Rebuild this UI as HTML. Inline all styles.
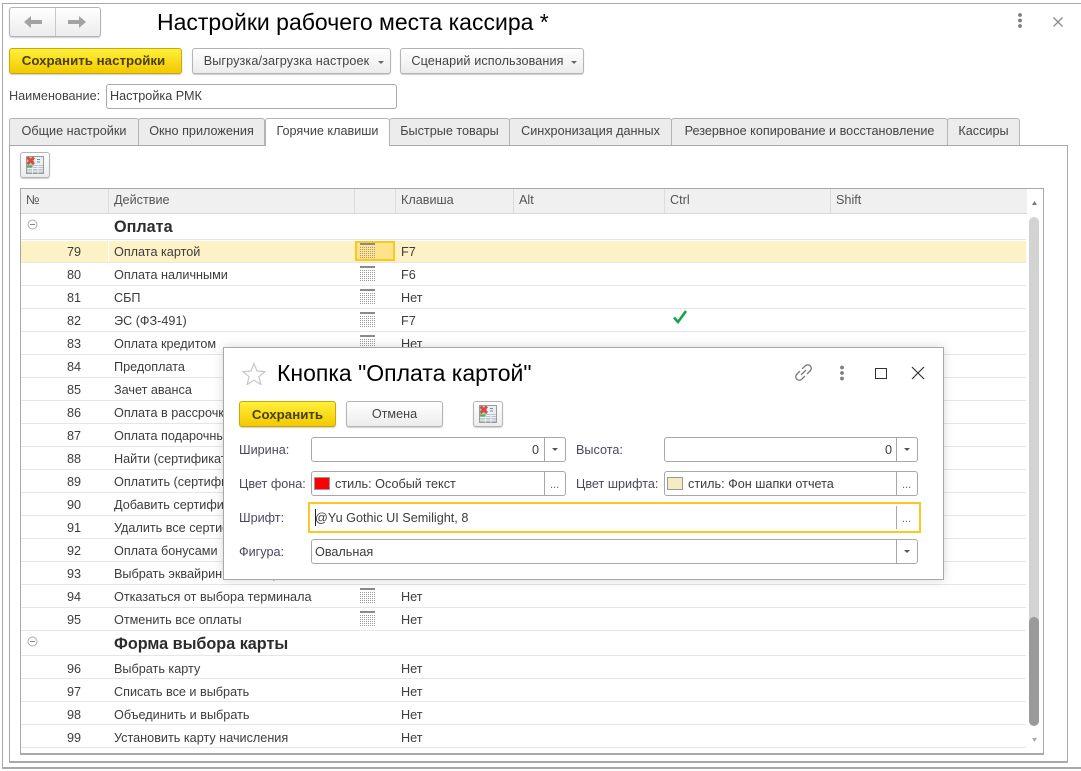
<!DOCTYPE html>
<html lang="ru"><head><meta charset="utf-8"><title>Настройки рабочего места кассира</title>
<style>
html,body{margin:0;padding:0;background:#fff}
#p{position:relative;width:1081px;height:771px;overflow:hidden;background:#fff;font:12.65px/16px "Liberation Sans",Arial,sans-serif;color:#3c3c3c}
#p div,#p span,#p svg{position:absolute;box-sizing:border-box;white-space:nowrap}
.btn{background:linear-gradient(#fff,#ececec);border:1px solid #b4b4b4;border-radius:3px;box-shadow:0 1px 1px #ccc;text-align:center;color:#444}
.y{background:linear-gradient(#fff03a,#f2c900);border:1px solid #c8a90c;border-radius:3px;box-shadow:0 1px 1px #ccc;text-align:center;font-weight:bold;color:#4a3f08;font-size:13.3px}
.tab{top:118px;height:27px;background:#ececec;border:1px solid #b4b4b4;border-bottom:0;border-radius:3px 3px 0 0;text-align:center;line-height:25px;color:#444}
.h{top:189px;height:24px;background:#f0f0f0;line-height:23px;padding-left:5px;color:#555;border-right:1px solid #dcdcdc}
.r{left:21px;width:1005px;height:23px;border-bottom:1px solid #e6e6e6}
.n{left:0;width:60px;text-align:right;top:4px}
.a{left:93px;top:4px}
.k{left:380px;top:4px}
.b .n,.b .a,.b .k{top:5px}
.g{left:93px;top:5px;font-size:16.200px;font-weight:bold;color:#2c2c2c}
.lb{color:#4d4660}
.f{background:#fff;border:1px solid #a8a8a8;border-radius:3px;color:#3c3c3c}
.sep{width:1px;background:#a8a8a8;top:0;bottom:0}
.t{font-size:23px;line-height:28px;color:#000}
</style></head><body>
<div id="p">
<svg width="0" height="0" style="left:0;top:0"><defs>
<pattern id="d" width="2" height="2" patternUnits="userSpaceOnUse"><rect width="1" height="1" fill="#9a9a9a"/></pattern>
<symbol id="cal" viewBox="0 0 15 17"><rect x="0" y="2" width="15" height="2" fill="#8a8a8a"/><rect x="0" y="6" width="15" height="11" fill="url(#d)"/></symbol>
<symbol id="tb" viewBox="0 0 18 18"><rect x="0.500" y="0.500" width="17" height="17" fill="#b9c4c8" stroke="#9a9a9a"/><rect x="8" y="1" width="9" height="8" fill="#e6f0f5"/><path d="M11 3.500h3M11 6h3" stroke="#7a8a99"/><path d="M1 12.500h16M1 15h16M6.500 9.500v8M12 9.500v8" stroke="#eef1f2"/><rect x="1" y="10" width="16" height="1" fill="#eef1f2"/><rect x="1" y="9.500" width="5.500" height="2" fill="#4ab84e"/><path d="M1.500 1.500l6.500 6.500M8 1.500L1.500 8" stroke="#dc4a3c" stroke-width="2.800"/></symbol>
</defs></svg>

<!-- window -->
<div style="left:2px;top:3px;width:1079px;height:766px;border:1px solid #a8a8a8;border-width:1px 0 2px 1px"></div>

<div class="btn" style="left:9px;top:7px;width:92px;height:30px"></div>
<div style="left:55px;top:8px;width:1px;height:28px;background:#c8c8c8"></div>
<svg style="left:24px;top:16px" width="18" height="12" viewBox="0 0 18 12"><path d="M0 6L7 0V4H18V8H7V12Z" fill="#a3a3a3"/></svg>
<svg style="left:68px;top:16px" width="18" height="12" viewBox="0 0 18 12"><path d="M18 6L11 0V4H0V8H11V12Z" fill="#a3a3a3"/></svg>
<div class="t" style="left:157px;top:8px">Настройки рабочего места кассира *</div>
<svg style="left:1016px;top:12px" width="8" height="17" viewBox="0 0 8 17"><circle cx="4" cy="3" r="1.900" fill="#7d7d7d"/><circle cx="4" cy="8.500" r="1.900" fill="#7d7d7d"/><circle cx="4" cy="14" r="1.900" fill="#7d7d7d"/></svg>
<svg style="left:1052px;top:16px" width="12" height="12" viewBox="0 0 12 12"><path d="M1.500 1.500l9 9M10.500 1.500l-9 9" stroke="#8a8a8a" stroke-width="1.300"/></svg>

<div class="y" style="left:9px;top:48px;width:173px;height:26px;line-height:24px;padding-right:4px">Сохранить настройки</div>
<div class="btn" style="left:192px;top:48px;width:199px;height:26px;line-height:25px;padding-right:10px;letter-spacing:.1px">Выгрузка/загрузка настроек</div>
<svg style="left:378px;top:61px" width="6" height="3"><path d="M0 0h6L3 3z" fill="#666"/></svg>
<div class="btn" style="left:400px;top:48px;width:184px;height:26px;line-height:25px;padding-right:9px;letter-spacing:.1px">Сценарий использования</div>
<svg style="left:571px;top:61px" width="6" height="3"><path d="M0 0h6L3 3z" fill="#666"/></svg>

<div style="left:9px;top:88px;color:#444">Наименование:</div>
<div class="f" style="left:106px;top:84px;width:291px;height:25px;line-height:23px;padding-left:3px">Настройка РМК</div>

<!-- panel -->
<div style="left:9px;top:145px;width:1059px;height:618px;border:1px solid #a8a8a8;border-width:1px 1px 2px 1px"></div>
<div class="tab" style="left:9px;width:130px">Общие настройки</div>
<div class="tab" style="left:138px;width:127px">Окно приложения</div>
<div class="tab" style="left:509px;width:163px">Синхронизация данных</div>
<div class="tab" style="left:671px;width:277px">Резервное копирование и восстановление</div>
<div class="tab" style="left:947px;width:73px">Кассиры</div>
<div class="tab" style="left:389px;width:121px">Быстрые товары</div>
<div class="tab" style="left:265px;width:125px;height:28px;background:#fff">Горячие клавиши</div>

<div class="btn" style="left:20px;top:152px;width:30px;height:26px"></div>
<svg style="left:26px;top:156px" width="18" height="18"><use href="#tb"/></svg>

<!-- table -->
<div style="left:20px;top:188px;width:1024px;height:567px;border:1px solid #a8a8a8;border-width:1px 1px 2px 1px"></div>
<div class="h" style="left:21px;width:88px">№</div>
<div class="h" style="left:109px;width:246px">Действие</div>
<div class="h" style="left:355px;width:41px"></div>
<div class="h" style="left:396px;width:118px">Клавиша</div>
<div class="h" style="left:514px;width:151px">Alt</div>
<div class="h" style="left:665px;width:166px">Ctrl</div>
<div class="h" style="left:831px;width:196px;border-right:0">Shift</div>
<div style="left:21px;top:213px;width:1006px;height:1px;background:#d8d8d8"></div>

<div class="r" style="top:214px;height:26px"><span class="g">Оплата</span></div>
<svg style="left:27px;top:219px" width="11" height="11"><circle cx="5.500" cy="5.500" r="4.500" fill="#fff" stroke="#aaa"/><path d="M3 5.500h5" stroke="#888"/></svg>

<div class="r" style="top:240px;background:#fdf2c5;box-shadow:inset 0 1px #fff"><span class="n">79</span><span class="a">Оплата картой</span><span class="k">F7</span></div>
<div style="left:108px;top:240px;width:1px;height:22px;background:#fff"></div>
<div style="left:355px;top:241px;width:40px;height:20px;background:#ffe38a;border:2px solid #fbc81f"></div>
<div class="r" style="top:263px"><span class="n">80</span><span class="a">Оплата наличными</span><span class="k">F6</span></div>
<div class="r" style="top:286px"><span class="n">81</span><span class="a">СБП</span><span class="k">Нет</span></div>
<div class="r" style="top:309px"><span class="n">82</span><span class="a">ЭС (ФЗ-491)</span><span class="k">F7</span></div>
<div class="r" style="top:332px"><span class="n">83</span><span class="a">Оплата кредитом</span><span class="k">Нет</span></div>
<div class="r" style="top:355px"><span class="n">84</span><span class="a">Предоплата</span><span class="k">Нет</span></div>
<div class="r" style="top:378px"><span class="n">85</span><span class="a">Зачет аванса</span><span class="k">Нет</span></div>
<div class="r" style="top:401px"><span class="n">86</span><span class="a">Оплата в рассрочку</span><span class="k">Нет</span></div>
<div class="r" style="top:424px"><span class="n">87</span><span class="a">Оплата подарочным</span><span class="k">Нет</span></div>
<div class="r" style="top:447px"><span class="n">88</span><span class="a">Найти (сертификат)</span><span class="k">Нет</span></div>
<div class="r" style="top:470px"><span class="n">89</span><span class="a">Оплатить (сертификат)</span><span class="k">Нет</span></div>
<div class="r" style="top:493px"><span class="n">90</span><span class="a">Добавить сертификат</span><span class="k">Нет</span></div>
<div class="r" style="top:516px"><span class="n">91</span><span class="a">Удалить все сертификаты</span><span class="k">Нет</span></div>
<div class="r" style="top:539px"><span class="n">92</span><span class="a">Оплата бонусами</span><span class="k">Нет</span></div>
<div class="r" style="top:562px"><span class="n">93</span><span class="a">Выбрать эквайринговый терминал</span><span class="k">Нет</span></div>
<div class="r" style="top:585px"><span class="n">94</span><span class="a">Отказаться от выбора терминала</span><span class="k">Нет</span></div>
<div class="r" style="top:608px"><span class="n">95</span><span class="a">Отменить все оплаты</span><span class="k">Нет</span></div>
<div class="r" style="top:631px;height:25px"><span class="g">Форма выбора карты</span></div>
<svg style="left:27px;top:636px" width="11" height="11"><circle cx="5.500" cy="5.500" r="4.500" fill="#fff" stroke="#aaa"/><path d="M3 5.500h5" stroke="#888"/></svg>
<div class="r b" style="top:656px"><span class="n">96</span><span class="a">Выбрать карту</span><span class="k">Нет</span></div>
<div class="r b" style="top:679px"><span class="n">97</span><span class="a">Списать все и выбрать</span><span class="k">Нет</span></div>
<div class="r b" style="top:702px"><span class="n">98</span><span class="a">Объединить и выбрать</span><span class="k">Нет</span></div>
<div class="r b" style="top:725px"><span class="n">99</span><span class="a">Установить карту начисления</span><span class="k">Нет</span></div>

<svg style="left:360px;top:241px" width="15" height="17"><use href="#cal"/></svg>
<svg style="left:360px;top:264px" width="15" height="17"><use href="#cal"/></svg>
<svg style="left:360px;top:287px" width="15" height="17"><use href="#cal"/></svg>
<svg style="left:360px;top:310px" width="15" height="17"><use href="#cal"/></svg>
<svg style="left:360px;top:333px" width="15" height="17"><use href="#cal"/></svg>
<svg style="left:360px;top:586px" width="15" height="17"><use href="#cal"/></svg>
<svg style="left:360px;top:609px" width="15" height="17"><use href="#cal"/></svg>

<svg style="left:672px;top:310px" width="16" height="14" viewBox="0 0 16 14"><path d="M2 7.500l4 4.500 8-11" fill="none" stroke="#16a34a" stroke-width="2.600"/></svg>

<!-- scrollbar -->
<svg style="left:1032px;top:201px" width="5" height="4"><path d="M2.500 0L5 4H0z" fill="#777"/></svg>
<div style="left:1029px;top:217px;width:10px;height:410px;background:#d3d3d3;border-radius:5px 5px 0 0"></div>
<div style="left:1029px;top:617px;width:10px;height:109px;background:#9a9a9a;border-radius:5px"></div>
<svg style="left:1032px;top:738px" width="5" height="4"><path d="M0 0h5L2.500 4z" fill="#aaa"/></svg>

<!-- dialog -->
<div style="left:223px;top:347px;width:721px;height:233px;background:#fff;border:1px solid #a8a8a8;box-shadow:0 0 10px rgba(0,0,0,.16)"></div>
<svg style="left:242px;top:362px" width="24" height="23" viewBox="0 0 24 23"><path d="M12 1.500l3 7.500 8 .6-6.100 5.100 2 7.800L12 18.200 5.100 22.500l2-7.800L1 9.600 9 9z" fill="#fff" stroke="#c6c6c6" stroke-width="1.200"/></svg>
<div class="t" style="left:277px;top:359px">Кнопка "Оплата картой"</div>
<svg style="left:793px;top:362px" width="21" height="21" viewBox="0 0 21 21"><g transform="rotate(-45 10.500 10.500)" fill="none" stroke="#777" stroke-width="1.300"><path d="M9 7H4.500a3.500 3.500 0 0 0 0 7H9"/><path d="M12 7h4.500a3.500 3.500 0 0 1 0 7H12"/><path d="M7 10.500h7"/></g></svg>
<svg style="left:838px;top:365px" width="8" height="16" viewBox="0 0 8 16"><circle cx="4" cy="2.500" r="1.900" fill="#7d7d7d"/><circle cx="4" cy="8" r="1.900" fill="#7d7d7d"/><circle cx="4" cy="13.500" r="1.900" fill="#7d7d7d"/></svg>
<div style="left:875px;top:368px;width:12px;height:11px;border:1px solid #333"></div>
<svg style="left:911px;top:366px" width="14" height="14" viewBox="0 0 14 14"><path d="M1 1l12 12M13 1L1 13" stroke="#333" stroke-width="1.200"/></svg>

<div class="y" style="left:239px;top:401px;width:97px;height:26px;line-height:25px">Сохранить</div>
<div class="btn" style="left:346px;top:401px;width:97px;height:26px;line-height:25px">Отмена</div>
<div class="btn" style="left:473px;top:401px;width:30px;height:26px"></div>
<svg style="left:479px;top:405px" width="18" height="18"><use href="#tb"/></svg>

<div class="lb" style="left:239px;top:442px">Ширина:</div>
<div class="f" style="left:311px;top:437px;width:255px;height:25px"><span style="right:26px;top:4px">0</span><div class="sep" style="left:232px"></div><svg style="left:240px;top:10px" width="6" height="3"><path d="M0 0h6L3 3z" fill="#555"/></svg></div>
<div class="lb" style="left:576px;top:442px">Высота:</div>
<div class="f" style="left:664px;top:437px;width:254px;height:25px"><span style="right:25px;top:4px">0</span><div class="sep" style="left:231px"></div><svg style="left:239px;top:10px" width="6" height="3"><path d="M0 0h6L3 3z" fill="#555"/></svg></div>

<div class="lb" style="left:239px;top:476px">Цвет фона:</div>
<div class="f" style="left:311px;top:471px;width:255px;height:25px"><span style="left:2px;top:5px;width:16px;height:13px;background:#f00;border:1px solid #999"></span><span style="left:23px;top:4px">стиль: Особый текст</span><div class="sep" style="left:232px"></div><span style="left:238px;top:5px;color:#666;font-size:11px">...</span></div>
<div class="lb" style="left:576px;top:476px">Цвет шрифта:</div>
<div class="f" style="left:664px;top:471px;width:254px;height:25px"><span style="left:2px;top:5px;width:16px;height:13px;background:#f5ecc4;border:1px solid #999"></span><span style="left:23px;top:4px">стиль: Фон шапки отчета</span><div class="sep" style="left:231px"></div><span style="left:237px;top:5px;color:#666;font-size:11px">...</span></div>

<div class="lb" style="left:239px;top:510px">Шрифт:</div>
<div style="left:308px;top:502px;width:613px;height:31px;background:#fff;border:2px solid #fbc81f"><span style="left:5px;top:6px">@Yu Gothic UI Semilight, 8</span><span style="left:5px;top:5px;width:1px;height:17px;background:#222"></span><div class="sep" style="left:586px;top:2px;bottom:2px"></div><span style="left:592px;top:7px;color:#666;font-size:11px">...</span></div>

<div class="lb" style="left:239px;top:544px">Фигура:</div>
<div class="f" style="left:311px;top:539px;width:607px;height:25px"><span style="left:3px;top:4px">Овальная</span><div class="sep" style="left:584px"></div><svg style="left:592px;top:10px" width="6" height="3"><path d="M0 0h6L3 3z" fill="#555"/></svg></div>
</div>
</body></html>
